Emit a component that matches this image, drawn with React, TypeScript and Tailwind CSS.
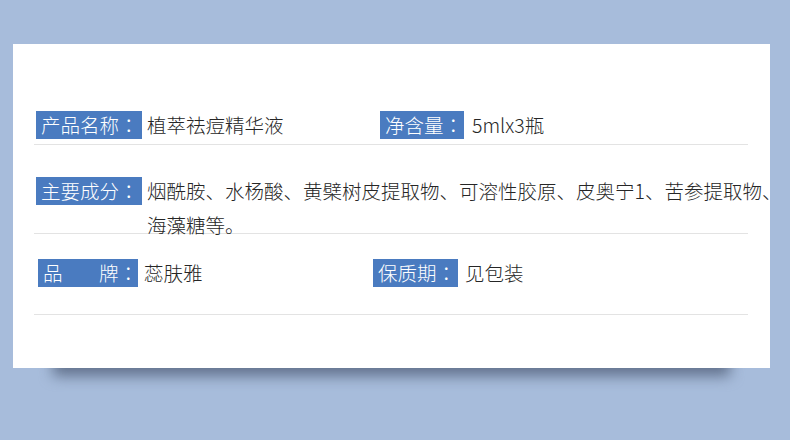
import React from "react";

const font = { fontFamily: '"Noto Sans CJK SC", "Noto Sans", sans-serif' };
const tc = { fontFamily: '"Noto Sans CJK TC", "Noto Sans CJK SC", sans-serif' };

function Colon() {
  return <span style={tc}>：</span>;
}

function Label({ children, w }: { children: React.ReactNode; w: string }) {
  return (
    <div className={`${w} h-[28px] bg-[#4a7bc0] text-white text-[19.5px] leading-[28px] pl-[5px] whitespace-nowrap shrink-0`}>
      {children}
      <Colon />
    </div>
  );
}

export default function App() {
  return (
    <div className="w-[790px] h-[440px] bg-[#a7bcdb] overflow-hidden pt-[44px] pl-[13px] font-light" style={font}>
      <div className="relative w-[757px] h-[324px]">
        <div className="absolute left-[40px] right-[40px] top-[308px] h-[24px] bg-[#62728d] blur-[7px]" />
        <div className="relative bg-white w-[757px] h-[324px] pt-[67px] pl-[21px] pr-[22px] text-[#262626]">
          {/* Row 1 */}
          <div className="h-[34px] border-b border-[#e3e3e3] pl-[2px]">
            <div className="flex items-center h-[28px]">
              <div className="flex items-center w-[344px] shrink-0">
                <Label w="w-[106px]">产品名称</Label>
                <span className="ml-[5px] text-[19.5px] whitespace-nowrap">植萃祛痘精华液</span>
              </div>
              <Label w="w-[84px]">净含量</Label>
              <span className="ml-[8px] text-[19.5px] whitespace-nowrap">5mlx3瓶</span>
            </div>
          </div>
          {/* Row 2 */}
          <div className="h-[89px] border-b border-[#e3e3e3] pl-[2px] pt-[32px]">
            <div className="flex items-start">
              <Label w="w-[106px]">主要成分</Label>
              <div className="ml-[5px] mt-[-3px] w-[640px] shrink-0 text-[19.5px] leading-[34px]">
                烟酰胺、水杨酸、黄檗树皮提取物、可溶性胶原、皮奥宁1、苦参提取物、海藻糖等。
              </div>
            </div>
          </div>
          {/* Row 3 */}
          <div className="h-[81px] border-b border-[#e3e3e3] pl-[4px] pt-[25px]">
            <div className="flex items-center h-[28px]">
              <div className="flex items-center w-[335px] shrink-0">
                <div className="w-[100px] h-[28px] bg-[#4a7bc0] text-white text-[19.5px] leading-[28px] pl-[5px] flex justify-between shrink-0">
                  <span>品</span>
                  <span>
                    牌<Colon />
                  </span>
                </div>
                <span className="ml-[6px] text-[19.5px] whitespace-nowrap">蕊肤雅</span>
              </div>
              <Label w="w-[85px]">保质期</Label>
              <span className="ml-[7px] text-[19.5px] whitespace-nowrap">见包装</span>
            </div>
          </div>
        </div>
      </div>
    </div>
  );
}
